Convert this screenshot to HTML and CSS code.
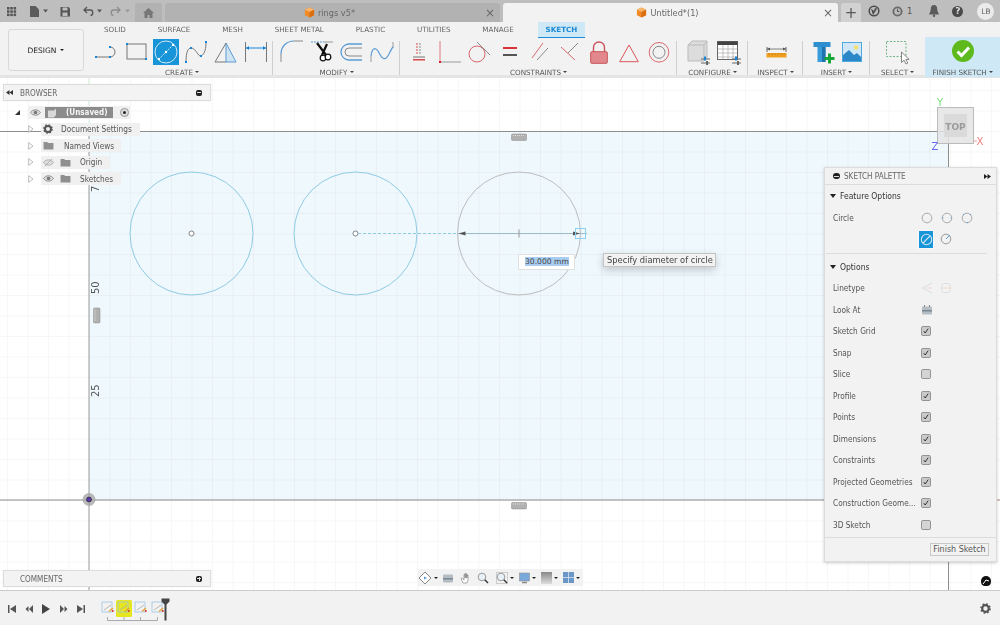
FILE: index.html
```html
<!DOCTYPE html>
<html lang="en">
<head>
<meta charset="utf-8">
<title>Fusion 360 sketch</title>
<link rel="stylesheet" href="styles.css">
</head>
<body>
<svg class="defs" width="0" height="0">
  <symbol id="cube" viewBox="0 0 12 12"><path d="M6 .5 11 3v6l-5 2.500L1 9V3z" fill="#f08a24"/><path d="M6 .5 11 3 6 5.500 1 3z" fill="#f9b56a"/><path d="M6 5.500 11 3v6l-5 2.500z" fill="#d96f12"/></symbol>
  <symbol id="tl" viewBox="0 0 16 16"><rect x="2" y="2" width="10" height="10" fill="none" stroke="#9cc3e2" stroke-width=".8"/><path d="M4 10 11 5" stroke="#aaa" stroke-width=".8"/><path d="M9 11.500 13 8" stroke="#e8a030" stroke-width="1.200"/><circle cx="12.800" cy="11" r="1" fill="#d8342c"/></symbol>
  <symbol id="check" viewBox="0 0 10 10"><rect x=".5" y=".5" width="9" height="9" rx="1.200" fill="#cacaca" stroke="#808080" stroke-width=".8"/><path d="M2.800 5.200 4.200 7 7.200 2.600" fill="none" stroke="#222" stroke-width=".9"/></symbol>
  <symbol id="nocheck" viewBox="0 0 10 10"><rect x=".5" y=".5" width="9" height="9" rx="1.200" fill="#d4d4d4" stroke="#808080" stroke-width=".8"/></symbol>
  <symbol id="eye" viewBox="0 0 12 10"><path d="M.5 5C3 1 9 1 11.500 5 9 9 3 9 .5 5z" fill="#ddd" stroke="#888"/><circle cx="6" cy="5" r="2" fill="#777"/></symbol>
  <symbol id="folder" viewBox="0 0 12 10"><path d="M.5 1h4l1 1.200h6V9.500H.5z" fill="#8f8f8f"/></symbol>
  <symbol id="twist" viewBox="0 0 6 8"><path d="M.7.7 5 4 .7 7.300z" fill="#fff" stroke="#aaa" stroke-width=".8"/></symbol>
</svg>
<div class="app">
  <header class="titlebar">
    <svg class="tleft" width="135" height="22" viewBox="0 0 135 22">
      <g fill="#555"><rect x="7" y="7" width="2.500" height="2.500"/><rect x="10.300" y="7" width="2.500" height="2.500"/><rect x="13.600" y="7" width="2.500" height="2.500"/><rect x="7" y="10.300" width="2.500" height="2.500"/><rect x="10.300" y="10.300" width="2.500" height="2.500"/><rect x="13.600" y="10.300" width="2.500" height="2.500"/><rect x="7" y="13.600" width="2.500" height="2.500"/><rect x="10.300" y="13.600" width="2.500" height="2.500"/><rect x="13.600" y="13.600" width="2.500" height="2.500"/></g>
      <path d="M30 6h5.500L39 9.500V17H30z" fill="#5c5c5c"/><path d="M43 9.500h5l-2.500 3z" fill="#555"/>
      <path d="M60.500 7h8l1.500 1.500V16.500h-9.500z" fill="#555"/><rect x="62.500" y="7.500" width="5" height="3" fill="#bebebe"/><rect x="62.500" y="12.500" width="5" height="3.500" fill="#bebebe"/>
      <path d="M84 10h6.500c3 0 3 5.500 0 5.500M87 7l-3 3 3 3" fill="none" stroke="#555" stroke-width="1.300"/><path d="M97 9.500h5l-2.500 3z" fill="#555"/>
      <path d="M120 10h-6.500c-3 0-3 5.500 0 5.500M117 7l3 3-3 3" fill="none" stroke="#8c8c8c" stroke-width="1.300"/><path d="M125 9.500h5l-2.500 3z" fill="#999"/>
    </svg>
    <div class="tab tab-home"><svg width="11" height="10" viewBox="0 0 11 10"><path d="M5.500 0 11 5H9.500v5H6.500V7h-2v3H1.500V5H0z" fill="#777"/></svg></div>
    <div class="tab tab-doc"><svg class="tab-cube" width="11" height="11"><use href="#cube"/></svg><span>rings v5*</span><b class="tab-x">×</b></div>
    <div class="tab tab-doc tab-active"><svg class="tab-cube" width="11" height="11"><use href="#cube"/></svg><span>Untitled*(1)</span><b class="tab-x">×</b></div>
    <div class="tab tab-plus">+</div>
    <div class="tright">
      <svg class="tr-globe" width="12" height="12" viewBox="0 0 12 12"><circle cx="6" cy="6" r="4.800" fill="none" stroke="#4a4a4a" stroke-width="1.500"/><path d="M3 3.500 6 6l1-3 2 .5-2 3.500-2 3z" fill="#4a4a4a"/></svg>
      <svg class="tr-clock" width="11" height="11" viewBox="0 0 12 12"><circle cx="6" cy="6" r="5.500" fill="#6a6a6a"/><circle cx="6" cy="6" r="3.500" fill="#bbb"/><path d="M6 3.500V6h2" stroke="#444" fill="none"/></svg>
      <span class="tr-count">1</span>
      <svg class="tr-bell" width="10" height="12" viewBox="0 0 10 12"><path d="M5 0c2.500 0 3.200 2 3.200 4 0 3 1.800 4.500 1.800 5.500H0C0 8.500 1.800 7 1.800 4 1.800 2 2.500 0 5 0z" fill="#5a5a5a"/><circle cx="5" cy="10.800" r="1.200" fill="#5a5a5a"/></svg>
      <span class="tr-help">?</span>
      <span class="tr-user">LB</span>
    </div>
  </header>

  <section class="toolbar">
    <button class="design">DESIGN<i class="caret caret-dark"></i></button>
    <div class="ribbon">
      <nav class="tabs">
        <span class="rtab">SOLID</span><span class="rtab">SURFACE</span><span class="rtab">MESH</span><span class="rtab">SHEET METAL</span><span class="rtab">PLASTIC</span><span class="rtab">UTILITIES</span><span class="rtab">MANAGE</span><span class="rtab rtab-on">SKETCH</span>
      </nav>
      <div class="groups">
        <div class="group g-create">
          <div class="tools">
            <svg class="tool" viewBox="0 0 30 30"><path d="M5 19H19A5 5 0 0 0 19 9" fill="none" stroke="#777"/><path d="M4 18h2v2H4zM18 18h2v2h-2zM18 8h2v2h-2z" fill="#1b86d8"/></svg>
            <svg class="tool" viewBox="0 0 30 30"><rect x="6" y="6" width="19" height="15" fill="none" stroke="#777"/><path d="M5 5h2v2H5zM24 20h2v2h-2z" fill="#1b86d8"/></svg>
            <svg class="tool" viewBox="0 0 30 30"><rect x="2" y="1" width="26" height="26" fill="#1895d8"/><circle cx="15" cy="14" r="11" fill="none" stroke="#cfe6f5" stroke-width="1"/><path d="M8 21 22 7" stroke="#cfe6f5" stroke-dasharray="2 1"/><circle cx="15" cy="14" r="1.200" fill="#fff"/><path d="M21 6h2v2h-2zM7 20h2v2H7z" fill="#fff"/></svg>
            <svg class="tool" viewBox="0 0 30 30"><path d="M5 24C5 14 7 10 10 10 15 10 17 19 20 18 24 16 25 10 25 4" fill="none" stroke="#777"/><path d="M4 23h2v2H4zM9 9h2v2H9zM24 3h2v2h-2zM19 17h2v2h-2z" fill="#1b86d8"/></svg>
            <svg class="tool" viewBox="0 0 30 30"><path d="M15 5 25 24H15z" fill="#cfe4f3" stroke="#5b9bd5"/><path d="M15 5 4 24H15" fill="none" stroke="#777"/></svg>
            <svg class="tool" viewBox="0 0 30 30"><path d="M4.500 4v20M25.500 4v20" stroke="#777"/><path d="M5 10h20" stroke="#1b86d8"/><path d="M5 10l3-2v4zM25 10l-3-2v4z" fill="#1b86d8"/></svg>
          </div>
          <div class="glabel">CREATE<i class="caret"></i></div>
        </div>
        <div class="group g-modify">
          <div class="tools">
            <svg class="tool" viewBox="0 0 30 30"><path d="M4 24V16M17 3H26" fill="none" stroke="#888"/><path d="M4 16C4 8 10 3 17 3" fill="none" stroke="#5b9bd5" stroke-width="1.200"/></svg>
            <svg class="tool" viewBox="0 0 30 30"><path d="M4 4h13" stroke="#5b9bd5" stroke-dasharray="2 1"/><path d="M17 4h9" stroke="#999"/><path d="M10 5 19 17M20 6 15 17" stroke="#111" stroke-width="2.200"/><circle cx="16" cy="20" r="2.800" fill="#fff" stroke="#111" stroke-width="1.200"/><circle cx="21" cy="19" r="2.800" fill="#fff" stroke="#111" stroke-width="1.200"/></svg>
            <svg class="tool" viewBox="0 0 30 30"><path d="M25 6H12A8 8 0 0 0 12 22H25" fill="none" stroke="#5b9bd5" stroke-width="1.300"/><path d="M25 10H12A4 4 0 0 0 12 18H25" fill="none" stroke="#888"/></svg>
            <svg class="tool" viewBox="0 0 30 30"><path d="M4 24V18M26 4v6" stroke="#999"/><path d="M4 18C5 10 8 9 11 13 15 21 18 24 22 16 24 12 25 10 26 9" fill="none" stroke="#5b9bd5" stroke-width="1.200"/></svg>
          </div>
          <div class="glabel">MODIFY<i class="caret"></i></div>
        </div>
        <div class="group g-constraints">
          <div class="tools">
            <svg class="tool" viewBox="0 0 30 30"><path d="M13 5v11" stroke="#d9484e" stroke-dasharray="2 1"/><path d="M16 5v11" stroke="#888" stroke-dasharray="2 1"/><path d="M9 19h12" stroke="#888" stroke-width="1.200"/><path d="M9 21h12v1.500H9z" fill="#d9484e"/></svg>
            <svg class="tool" viewBox="0 0 30 30"><path d="M6 3v21" stroke="#d9484e" opacity=".7"/><path d="M6 24h21" stroke="#999"/><rect x="5" y="23" width="2" height="2" fill="#d9242c"/></svg>
            <svg class="tool" viewBox="0 0 30 30"><circle cx="13" cy="16" r="8" fill="none" stroke="#d9686c"/><path d="M13 4 26 17" stroke="#888"/></svg>
            <svg class="tool" viewBox="0 0 30 30"><rect x="9" y="9" width="14" height="2" fill="#d8343a"/><rect x="9" y="16" width="14" height="2" fill="#555"/></svg>
            <svg class="tool" viewBox="0 0 30 30"><path d="M8 20 19 5" stroke="#d9686c"/><path d="M13 22 24 10" stroke="#888"/></svg>
            <svg class="tool" viewBox="0 0 30 30"><path d="M7 9 21 22" stroke="#d9686c"/><path d="M14 15 24 5" stroke="#888"/></svg>
            <svg class="tool" viewBox="0 0 30 30"><path d="M9.500 14V9.500a5.500 5.500 0 0 1 11 0V14" fill="none" stroke="#c9545a" stroke-width="1.400"/><rect x="6.700" y="13.700" width="16.600" height="11.600" rx="1" fill="#e2888c" stroke="#c9545a"/></svg>
            <svg class="tool" viewBox="0 0 30 30"><path d="M15 7 24.300 23.700H5.700z" fill="none" stroke="#d9545a"/></svg>
            <svg class="tool" viewBox="0 0 30 30"><circle cx="15" cy="14.300" r="9.800" fill="none" stroke="#d9686c"/><circle cx="15" cy="14.300" r="6" fill="none" stroke="#888"/></svg>
          </div>
          <div class="glabel">CONSTRAINTS<i class="caret"></i></div>
        </div>
        <div class="group g-configure">
          <div class="tools">
            <svg class="tool" viewBox="0 0 30 30"><path d="M5 7 9 3h15v17l-3 3H5z" fill="#dcdcdc" stroke="#bbb"/><path d="M5 7h16v16M21 7l3-4" fill="none" stroke="#bbb"/><path d="M18 21h9M18 25h9" stroke="#666" stroke-width="1.200"/><rect x="21" y="18.500" width="2" height="4" fill="#1b86d8"/><rect x="23" y="23" width="2" height="4" fill="#666"/></svg>
            <svg class="tool" viewBox="0 0 30 30"><rect x="4.500" y="3.500" width="20" height="18" fill="#fff" stroke="#666"/><rect x="4.500" y="3.500" width="20" height="3.500" fill="#444"/><path d="M5 11h19M5 15h19M5 19h19M10 7v14M15 7v14M20 7v14" stroke="#aaa" stroke-width=".7"/><path d="M19 21h9M19 25h9" stroke="#666" stroke-width="1.200"/><rect x="22" y="18.500" width="2" height="4" fill="#1b86d8"/><rect x="24" y="23" width="2" height="4" fill="#666"/></svg>
          </div>
          <div class="glabel">CONFIGURE<i class="caret"></i></div>
        </div>
        <div class="group g-inspect">
          <div class="tools">
            <svg class="tool" viewBox="0 0 30 30"><path d="M6 9v5M25 9v5" stroke="#666"/><path d="M6 11h19" stroke="#666" stroke-width=".8"/><path d="M6 11l3-1.500v3zM25 11l-3-1.500v3z" fill="#555"/><rect x="5.500" y="15" width="20" height="4.500" fill="#f0a020"/><path d="M8 15v2M11 15v2M14 15v2M17 15v2M20 15v2M23 15v2" stroke="#b87410" stroke-width=".6"/></svg>
          </div>
          <div class="glabel">INSPECT<i class="caret"></i></div>
        </div>
        <div class="group g-insert">
          <div class="tools">
            <svg class="tool" viewBox="0 0 30 30"><path d="M6.500 4h17v5h-17z" fill="#2e8fd0"/><path d="M10.500 9h8v15h-8z" fill="#3a9bd9"/><path d="M15 9h3.500v15H15z" fill="#1f74ad"/><path d="M21 15.500h3v3.500h3.500v3H24v3.500h-3V22h-3.500v-3H21z" fill="#18a838"/></svg>
            <svg class="tool" viewBox="0 0 30 30"><rect x="5" y="4" width="20" height="20" fill="#4fa8de"/><rect x="6" y="5" width="18" height="18" fill="#cfe7f6"/><circle cx="19" cy="9.500" r="2.200" fill="#f5e070"/><path d="M6 23V17l6-5 5 5 3-2 4 4v4z" fill="#2a88c8"/></svg>
          </div>
          <div class="glabel">INSERT<i class="caret"></i></div>
        </div>
        <div class="group g-select">
          <div class="tools">
            <svg class="tool" viewBox="0 0 30 30"><rect x="3.500" y="3.500" width="19.500" height="15" fill="none" stroke="#6fb58a" stroke-dasharray="2 1.500"/><path d="M18.500 14v10.500l2.500-2.300 2 3.800 1.800-1-2-3.600h3.300z" fill="#fff" stroke="#777" stroke-width=".9"/></svg>
          </div>
          <div class="glabel">SELECT<i class="caret"></i></div>
        </div>
        <div class="group g-finish">
          <div class="tools">
            <svg class="tool" viewBox="0 0 30 30"><circle cx="15" cy="13" r="11" fill="#5db91c"/><path d="M9.500 13.500 13.500 17.500 21 9.500" fill="none" stroke="#fff" stroke-width="3"/></svg>
          </div>
          <div class="glabel">FINISH SKETCH<i class="caret"></i></div>
        </div>
      </div>
    </div>
  </section>

  <main class="canvas">
    <svg class="scene" viewBox="0 78 1000 512" width="1000" height="512">
      <defs>
        <pattern id="grid" patternUnits="userSpaceOnUse" x="89" y="500" width="20.500" height="20.500"><path d="M0 0H20.500M0 0V20.500" fill="none" stroke="#000" stroke-opacity=".06" stroke-width="1"/></pattern>
      </defs>
      <rect x="89" y="131" width="859" height="369" fill="#eff8fd"/>
      <rect x="0" y="78" width="1000" height="512" fill="url(#grid)"/>
      <path d="M0 131.500H948.500V590" fill="none" stroke="#8e8e8e"/>
      <path d="M0 500H1000" stroke="#8a8a8a"/>
      <path d="M89 131V590" stroke="#9a9a9a"/>
      <path d="M89 78V131" stroke="#d4ecd4"/>
      <g fill="none" stroke="#8fcbe4">
        <circle cx="191.500" cy="233.500" r="61.500"/>
        <circle cx="355.500" cy="233.500" r="61.500"/>
      </g>
      <g fill="#fff" stroke="#666" stroke-width=".8"><circle cx="191.500" cy="233.500" r="2.500"/><circle cx="355.500" cy="233.500" r="2.500"/></g>
      <circle cx="519" cy="233.500" r="61.500" fill="none" stroke="#bdbdbd"/>
      <path d="M358 233.500H458" stroke="#8fcbe4" stroke-dasharray="3 2"/>
      <path d="M458 233.500H587" stroke="#9fbccb"/>
      <path d="M519 229.500v8" stroke="#999"/>
      <path d="M458.500 233.500l7-2v4zM580 233.500l-7-2v4z" fill="#555"/>
      <rect x="575.500" y="228.500" width="10" height="10" fill="none" stroke="#8ad2f0"/>
      <g class="dim"><text transform="translate(99 192) rotate(-90)">7</text><text transform="translate(99 294) rotate(-90)">50</text><text transform="translate(99 397) rotate(-90)">25</text></g>
      <g fill="#b0b0b0" stroke="#8a8a8a" stroke-width=".5"><rect x="511.500" y="134" width="15" height="6.500" rx="1"/><rect x="511.500" y="502.500" width="15" height="6.500" rx="1"/><rect x="93.500" y="308" width="6.500" height="15" rx="1"/></g>
      <path d="M513 135.500h12M513 504h12M95 309.500v12" stroke="#eee" stroke-dasharray="1 1" stroke-width=".8"/>
      <circle cx="89" cy="499.500" r="6.500" fill="#a8a8a8" opacity=".8"/><circle cx="89" cy="499.500" r="2.500" fill="#5a3aa8" stroke="#222" stroke-width=".6"/>
      <g class="cube"><rect x="937.500" y="107.500" width="36" height="36" fill="#e4e4e4" fill-opacity=".85" stroke="#bbb"/><rect x="944" y="114" width="23" height="23" fill="#dadada"/><text class="cube-top" x="955.500" y="129.500" text-anchor="middle">TOP</text><text class="axis ax-y" x="940" y="106" text-anchor="middle">Y</text><text class="axis ax-z" x="935" y="150" text-anchor="middle">Z</text><text class="axis ax-x" x="980" y="145" text-anchor="middle">X</text></g>
      <path d="M974 141h3" stroke="#f0a0a0"/>
      <path d="M948 500H1000" stroke="#f0b8b8"/>
      <path d="M981 581a5 5 0 0 1 10 0c0 3-1 5-5 5s-5-2-5-5z" fill="#111"/><path d="M983 584l3-4 3 1" stroke="#fff" fill="none"/>
    </svg>

    <div class="panel browser">
      <svg class="pin" width="7" height="5" viewBox="0 0 7 5"><path d="M3.500 0v5L0 2.500zM7 0v5L3.500 2.500z" fill="#333"/></svg>
      <span class="panel-title">BROWSER</span>
      <i class="panel-dot dot-line"></i>
    </div>
    <div class="tree">
      <div class="row row-root">
        <svg class="expander" width="5" height="5" viewBox="0 0 5 5"><path d="M5 0V5H0z" fill="#333"/></svg>
        <div class="pill pill-root"><svg width="11" height="9"><use href="#eye"/></svg><span class="root-name"><svg width="10" height="10" viewBox="0 0 10 10"><path d="M1 2.500h6l2-2V7L7 9.500H1z" fill="#d8d8d8"/></svg><b>(Unsaved)</b></span><i class="radio"></i></div>
      </div>
      <div class="row"><svg class="twist" width="6" height="8"><use href="#twist"/></svg><div class="pill p-doc"><svg width="10" height="10" viewBox="0 0 10 10"><circle cx="5" cy="5" r="3" fill="none" stroke="#555" stroke-width="2"/><circle cx="5" cy="5" r="4.200" fill="none" stroke="#555" stroke-width="1.300" stroke-dasharray="1.600 1.700"/></svg><span>Document Settings</span></div></div>
      <div class="row"><svg class="twist" width="6" height="8"><use href="#twist"/></svg><div class="pill p-views"><svg width="11" height="9"><use href="#folder"/></svg><span>Named Views</span></div></div>
      <div class="row"><svg class="twist" width="6" height="8"><use href="#twist"/></svg><div class="pill p-origin"><svg width="11" height="9" viewBox="0 0 12 10"><path d="M.5 5C3 1 9 1 11.500 5 9 9 3 9 .5 5z" fill="#ddd" stroke="#aaa"/><path d="M2 9 10 1" stroke="#aaa"/></svg><svg width="11" height="9"><use href="#folder"/></svg><span>Origin</span></div></div>
      <div class="row"><svg class="twist" width="6" height="8"><use href="#twist"/></svg><div class="pill p-origin"><svg width="11" height="9"><use href="#eye"/></svg><svg width="11" height="9"><use href="#folder"/></svg><span>Sketches</span></div></div>
    </div>

    <div class="dim-input"><span>30.000 mm</span></div>
    <div class="tooltip">Specify diameter of circle</div>

    <aside class="palette">
      <div class="pal-head"><i class="panel-dot dot-minus dot-line"></i><span class="panel-title">SKETCH PALETTE</span><svg class="pal-pin" width="7" height="5" viewBox="0 0 7 5"><path d="M0 0v5l3.500-2.500zM3.500 0v5L7 2.500z" fill="#222"/></svg></div>
      <div class="pal-title"><i class="tri"></i>Feature Options</div>
      <div class="pal-row"><span class="pal-label">Circle</span>
        <svg class="c-ic" viewBox="0 0 12 12"><circle cx="6" cy="6" r="4.800" fill="none" stroke="#aaa"/></svg>
        <svg class="c-ic c-gap" viewBox="0 0 12 12"><circle cx="6" cy="6" r="4.800" fill="none" stroke="#aaa"/><path d="M1.500 6h1M9.500 6h1" stroke="#5b9bd5"/></svg>
        <svg class="c-ic c-gap" viewBox="0 0 12 12"><circle cx="6" cy="6" r="4.800" fill="none" stroke="#aaa"/><path d="M2 2.500h1M9 2.500h1M6 10.500h1" stroke="#5b9bd5"/></svg>
      </div>
      <div class="pal-row"><span class="pal-label"></span>
        <span class="c-sel"><svg width="13" height="13" viewBox="0 0 12 12"><circle cx="6" cy="6" r="4.800" fill="none" stroke="#cfe6f5"/><path d="M3 9 9 3" stroke="#cfe6f5"/></svg></span>
        <svg class="c-ic c-gap2" viewBox="0 0 12 12"><circle cx="6" cy="6" r="4.800" fill="none" stroke="#999"/><path d="M6 6 10 2" stroke="#5b9bd5"/></svg>
      </div>
      <hr class="pal-div">
      <div class="pal-title"><i class="tri"></i>Options</div>
      <div class="pal-row"><span class="pal-label">Linetype</span><svg class="c-ic lt" viewBox="0 0 12 12"><path d="M11 1 1 6l10 5" fill="none" stroke="#ddd"/><path d="M5 6h6" stroke="#f0c0a8" stroke-dasharray="1 1"/></svg><svg class="c-ic c-gap3" viewBox="0 0 12 12"><rect x="1.500" y="1.500" width="9" height="9" rx="2.500" fill="none" stroke="#e0e0e0"/><path d="M1.500 6h9" stroke="#f0c0a8" stroke-dasharray="1 1"/></svg></div>
      <div class="pal-row"><span class="pal-label">Look At</span><svg class="c-ic" viewBox="0 0 12 12"><rect x="1" y="2.500" width="10" height="8" rx="1" fill="#b4bcc4"/><rect x="1" y="6" width="10" height="1.500" fill="#7d8791"/><path d="M3.500 1v2M8.500 1v2" stroke="#888"/></svg></div>
      <div class="pal-row"><span class="pal-label">Sketch Grid</span><svg class="cb"><use href="#check"/></svg></div>
      <div class="pal-row"><span class="pal-label">Snap</span><svg class="cb"><use href="#check"/></svg></div>
      <div class="pal-row"><span class="pal-label">Slice</span><svg class="cb"><use href="#nocheck"/></svg></div>
      <div class="pal-row"><span class="pal-label">Profile</span><svg class="cb"><use href="#check"/></svg></div>
      <div class="pal-row"><span class="pal-label">Points</span><svg class="cb"><use href="#check"/></svg></div>
      <div class="pal-row"><span class="pal-label">Dimensions</span><svg class="cb"><use href="#check"/></svg></div>
      <div class="pal-row"><span class="pal-label">Constraints</span><svg class="cb"><use href="#check"/></svg></div>
      <div class="pal-row"><span class="pal-label">Projected Geometries</span><svg class="cb"><use href="#check"/></svg></div>
      <div class="pal-row"><span class="pal-label">Construction Geome...</span><svg class="cb"><use href="#check"/></svg></div>
      <div class="pal-row"><span class="pal-label">3D Sketch</span><svg class="cb"><use href="#nocheck"/></svg></div>
      <div class="pal-foot"><button class="finish-btn">Finish Sketch</button></div>
    </aside>

    <div class="panel comments">
      <span class="panel-title">COMMENTS</span>
      <i class="panel-dot dot-line dot-plus"></i>
    </div>

    <div class="navbar">
      <svg width="14" height="14" viewBox="0 0 14 14"><path d="M7 1 10 4 13 7 10 10 7 13 4 10 1 7 4 4z" fill="#fff" stroke="#888"/><path d="M6 5.500 9 7 6 8.500z" fill="#5b9bd5"/></svg><i class="caret caret-dark"></i>
      <svg class="nb-narrow" width="12" height="12" viewBox="0 0 12 12"><rect x="1" y="2.500" width="10" height="8" rx="1" fill="#b4bcc4"/><rect x="1" y="6" width="10" height="1.500" fill="#7d8791"/></svg>
      <svg class="nb-wide" width="12" height="12" viewBox="0 0 12 12"><path d="M3 11 1 6.500 2 6l2 2V2.500h1V6 1.500h1V6 2h1v4-3h1v5l-1 3z" fill="#fff" stroke="#777" stroke-width=".6"/></svg>
      <svg class="nb-gap" width="12" height="12" viewBox="0 0 12 12"><circle cx="5" cy="5" r="3.800" fill="#e8f1f8" stroke="#999"/><path d="M7.800 7.800 11 11" stroke="#333" stroke-width="1.400"/></svg>
      <svg class="nb-wide" width="12" height="12" viewBox="0 0 12 12"><rect x=".5" y=".5" width="11" height="11" fill="none" stroke="#ccc"/><circle cx="5" cy="5" r="3.800" fill="#e8f1f8" stroke="#999"/><path d="M7.800 7.800 11 11" stroke="#333" stroke-width="1.400"/></svg><i class="caret caret-dark"></i>
      <svg class="nb-gap" width="11" height="12" viewBox="0 0 11 12"><rect x=".5" y="1" width="10" height="8" fill="#7aa8d8" stroke="#888" stroke-width=".5"/><path d="M3 10.500h5" stroke="#888" stroke-width="1.500"/></svg><i class="caret caret-dark"></i>
      <svg class="nb-gap" width="11" height="12" viewBox="0 0 11 12"><defs><linearGradient id="gr" x1="0" y1="0" x2="0" y2="1"><stop offset="0" stop-color="#888"/><stop offset="1" stop-color="#ddd"/></linearGradient></defs><rect width="11" height="12" fill="url(#gr)"/></svg><i class="caret caret-dark"></i>
      <svg class="nb-gap" width="11" height="11" viewBox="0 0 11 11"><rect width="11" height="11" fill="#6a97c8"/><path d="M5.500 0v11M0 5.500h11" stroke="#e8eef5" stroke-width=".7"/></svg><i class="caret caret-dark"></i>
    </div>
  </main>

  <footer class="timeline">
    <svg class="tl-controls" width="180" height="35" viewBox="0 590 180 35">
      <g fill="#555">
        <path d="M8 605h1.500v8H8zM16 605v8l-6-4z"/>
        <path d="M33 605v8l-4-4zM28.500 606v6l-3-3z"/>
        <path d="M42 604v10l8-5z" fill="#444"/>
        <path d="M60 605v8l4-4zM64.500 606v6l3-3z"/>
        <path d="M77 605v8l6-4zM83.500 605H85v8h-1.500z"/>
      </g>
      <rect x="116" y="600" width="16" height="17" rx="1.500" fill="#e6e620"/>
      <use href="#tl" x="100" y="600" width="16" height="16"/>
      <use href="#tl" x="116" y="600" width="16" height="16"/>
      <use href="#tl" x="133" y="600" width="16" height="16"/>
      <use href="#tl" x="150" y="600" width="16" height="16"/>
      <path d="M107.500 617v3.500h50V617M124 617v3.500M140.500 617v3.500" fill="none" stroke="#aaa"/>
      <path d="M161.500 598.500h8v3l-3 3v16h-2v-16l-3-3z" fill="#444"/>
    </svg>
    <svg class="tl-gear" width="11" height="11" viewBox="0 0 10 10"><circle cx="5" cy="5" r="3" fill="none" stroke="#555" stroke-width="2"/><circle cx="5" cy="5" r="4.200" fill="none" stroke="#555" stroke-width="1.300" stroke-dasharray="1.600 1.700"/></svg>
  </footer>
</div>
</body>
</html>
```
FILE: styles.css
```css
* { box-sizing: border-box; }
html, body { margin: 0; padding: 0; }
body { width: 1000px; height: 625px; overflow: hidden; font-family: "DejaVu Sans", "Liberation Sans", sans-serif; font-size: 8px; color: #555; background: #fff; }
.defs { position: absolute; }
i { display: block; font-style: normal; }
.app { display: flex; flex-direction: column; width: 1000px; height: 625px; filter: blur(.3px); }

/* title bar */
.titlebar { display: flex; align-items: flex-end; height: 22px; flex: none; background: #bebebe; }
.tleft { flex: none; align-self: flex-start; }
.tab { display: flex; flex: none; align-items: center; height: 19px; background: #b2b2b2; border-radius: 3px 3px 0 0; font-size: 8.200px; color: #666; position: relative; }
.tab-home { width: 27px; justify-content: center; margin-right: 3px; }
.tab-doc { width: 335px; justify-content: center; gap: 3px; margin-right: 3px; padding-right: 6px; }
.tab-active { background: #f2f2f2; color: #666; }
.tab-plus { width: 20px; justify-content: center; background: #d2d2d2; font-size: 15px; color: #555; }
.tab-x { position: absolute; right: 5px; top: 3px; font-weight: normal; font-size: 12px; color: #666; }
.tab-cube { flex: none; }
.tright { display: flex; align-items: center; align-self: stretch; flex: 1; min-width: 0; padding-left: 7px; }
.tr-clock { margin-left: 12px; }
.tr-count { margin-left: 4px; font-size: 8.500px; color: #555; }
.tr-bell { margin-left: 17px; }
.tr-help { width: 11px; height: 11px; margin-left: 13px; border-radius: 50%; background: #4a4a4a; color: #ddd; font-size: 9px; font-weight: bold; line-height: 11px; text-align: center; }
.tr-user { width: 17px; height: 17px; margin-left: 14px; border-radius: 50%; background: #ebebeb; color: #666; font-size: 7.500px; line-height: 17px; text-align: center; }

/* ribbon */
.toolbar { display: flex; height: 56px; flex: none; background: #f2f2f2; border-bottom: 3px solid #e4e4e4; }
.design { flex: none; width: 76px; height: 42px; margin: 7px 0 0 8px; padding: 0; display: flex; align-items: center; justify-content: center; gap: 4px; background: #f3f3f3; border: 1px solid #d8d8d8; border-radius: 3px; font: 7.500px "DejaVu Sans", sans-serif; color: #222; }
.ribbon { flex: 1; display: flex; flex-direction: column; min-width: 0; }
.tabs { display: flex; gap: 15.800px; height: 16px; padding-left: 12px; flex: none; }
.rtab { padding: 0 8px; line-height: 15px; font-size: 7.200px; color: #666; white-space: nowrap; }
.rtab-on { background: #cfe8f5; color: #1c8ad6; font-weight: bold; border-bottom: 1px solid #1c8ad6; }
.groups { display: flex; flex: 1; padding-left: 7px; }
.group { display: flex; flex-direction: column; align-items: center; position: relative; }
.group::after { content: ""; position: absolute; right: 0; top: 3px; bottom: 2px; width: 1px; background: #cfcfcf; }
.g-create { width: 182px; }
.g-create .tools { margin-right: 3px; }
.g-modify { width: 127px; }
.g-constraints { width: 277px; }
.g-configure { width: 71px; }
.g-inspect { width: 55px; }
.g-insert { width: 67px; }
.g-select { width: 55px; }
.g-finish { width: 75px; background: #cfe8f5; margin-top: -1px; padding-top: 1px; }
.g-select::after, .g-finish::after { display: none; }
.g-modify .tools { padding-left: 1px; }
.tools { display: flex; height: 28px; flex: none; }
.tool { width: 30px; height: 30px; flex: none; display: block; }
.glabel { display: flex; align-items: center; gap: 2px; height: 10px; margin-top: 1px; font-size: 7.200px; color: #555; white-space: nowrap; }
.caret { width: 0; height: 0; flex: none; border-left: 2px solid transparent; border-right: 2px solid transparent; border-top: 2.500px solid #444; }
.caret-dark { border-top-color: #222; }

/* canvas */
.canvas { position: relative; flex: 1; overflow: hidden; background: #fff; }
.scene { display: block; }
.dim text { font-size: 10px; fill: #555; }
.cube-top { font-size: 9px; font-weight: bold; fill: #9a9a9a; }
.axis { font-size: 10px; }
.ax-y { fill: #7be07b; }
.ax-z { fill: #6a6af0; }
.ax-x { fill: #f07a7a; }

.panel { position: absolute; display: flex; align-items: center; background: #f3f3f3; border: 1px solid #dcdcdc; box-shadow: 0 0 1px rgba(0,0,0,.1); }
.panel-title { font-size: 8.100px; font-stretch: condensed; color: #666; white-space: nowrap; }
.panel-dot { position: relative; width: 6px; height: 6px; border-radius: 2px; background: #222; margin-left: auto; flex: none; }
.dot-line::after { content: ""; position: absolute; left: 1px; right: 1px; top: 2.500px; height: 1px; background: #ddd; }
.dot-plus::before { content: ""; position: absolute; left: 2.500px; top: 1px; bottom: 1px; width: 1px; background: #ddd; }
.browser { left: 3px; top: 6px; width: 208px; height: 17px; padding: 0 8px 0 2px; }
.browser .panel-title { margin-left: 7px; }
.pin { flex: none; }
.comments { left: 3px; top: 492px; width: 208px; height: 17px; padding: 0 8px 0 16px; }

.tree { position: absolute; left: 15px; top: 28px; display: flex; flex-direction: column; gap: 3.500px; }
.row { display: flex; align-items: center; height: 13px; font-size: 8.200px; font-stretch: condensed; color: #555; }
.expander { margin-right: 8px; }
.twist { margin: 0 7px 0 13px; }
.pill { display: flex; align-items: center; height: 13px; background: #f0f0f0; }
.pill-root { width: 102px; padding-left: 2px; gap: 4px; }
.root-name { display: flex; align-items: center; width: 68px; height: 11px; padding-left: 2px; background: #8c8c8c; color: #f5f5f5; }
.root-name b { margin-left: 9px; font-size: 8px; }
.radio { width: 9px; height: 9px; margin-left: 3px; border-radius: 50%; background: #222; border: 3px solid #ddd; outline: 1px solid #999; outline-offset: -1px; }
.p-doc { width: 99px; padding-left: 2px; gap: 8px; }
.p-views { width: 80px; padding-left: 2px; gap: 10px; }
.p-origin { padding: 0 8px 0 2px; gap: 6px; }
.p-origin span { margin-left: 3px; }

.dim-input { position: absolute; left: 518px; top: 176px; width: 57px; height: 16px; background: #fff; border: 1px solid #e0e0e0; padding-left: 6px; font-size: 7.600px; line-height: 14px; color: #444; white-space: nowrap; }
.dim-input span { background: #a9cdf0; }
.tooltip { position: absolute; left: 603px; top: 175px; width: 113px; height: 14px; padding-left: 3px; background: #f2f2f2; border: 1px solid #c4c4c4; box-shadow: 0 3px 8px rgba(0,0,0,.2); font-size: 8.300px; line-height: 12px; color: #444; white-space: nowrap; }

/* palette */
.palette { position: absolute; left: 824px; top: 89px; width: 173px; height: 395px; background: #f2f2f2; border: 1px solid #dcdcdc; box-shadow: 0 1px 3px rgba(0,0,0,.2); }
.pal-head { display: flex; align-items: center; height: 17px; padding: 0 5px 0 8px; gap: 4px; border-bottom: 1px solid #dcdcdc; }
.pal-pin { margin-left: auto; }
.dot-minus { margin-left: 0; width: 7px; border-radius: 3px; }
.pal-title { display: flex; align-items: center; height: 22px; padding-left: 5px; gap: 4px; font-size: 8.500px; font-stretch: condensed; color: #333; }
.tri { width: 0; height: 0; flex: none; border-left: 3px solid transparent; border-right: 3px solid transparent; border-top: 4px solid #222; }
.pal-row { display: flex; align-items: center; height: 21.500px; padding-left: 8px; font-size: 8.200px; font-stretch: condensed; color: #555; }
.pal-label { width: 88px; white-space: nowrap; flex: none; overflow: visible; }
.c-ic { width: 12px; height: 12px; flex: none; margin-left: 0; }
.c-gap { margin-left: 8px; }
.c-gap2 { margin-left: 5.500px; }
.c-gap3 { margin-left: 7px; }
.c-sel { display: flex; align-items: center; justify-content: center; width: 16px; height: 19px; margin-left: -3px; background: #1895d8; border: 1px solid #f8f8f8; flex: none; }
.cb { width: 10px; height: 10px; flex: none; }
.pal-div { height: 1px; margin: 3px 9px 1.500px 1px; border: 0; background: #dcdcdc; }
.pal-foot { display: flex; justify-content: flex-end; margin-top: 1.500px; height: 24px; padding: 5px 7px 0 0; border-top: 1px solid #dcdcdc; }
.finish-btn { width: 59px; height: 13px; padding: 0; background: #f2f2f2; border: 1px solid #c8c8c8; font: 8px "DejaVu Sans", sans-serif; color: #555; white-space: nowrap; }

/* nav bar */
.navbar { position: absolute; left: 418px; top: 491px; width: 165px; height: 17px; display: flex; align-items: center; gap: 2px; background: #f2f2f2; }
.nb-narrow { margin-left: 1.500px; }
.nb-gap { margin-left: 3px; }
.nb-wide { margin-left: 4.500px; }

/* timeline */
.timeline { display: flex; align-items: flex-start; height: 35px; flex: none; background: #f2f2f2; border-top: 1px solid #ccc; }
.tl-controls { flex: none; margin-top: -1px; }
.tl-gear { margin: 12px 9px 0 auto; }
```
